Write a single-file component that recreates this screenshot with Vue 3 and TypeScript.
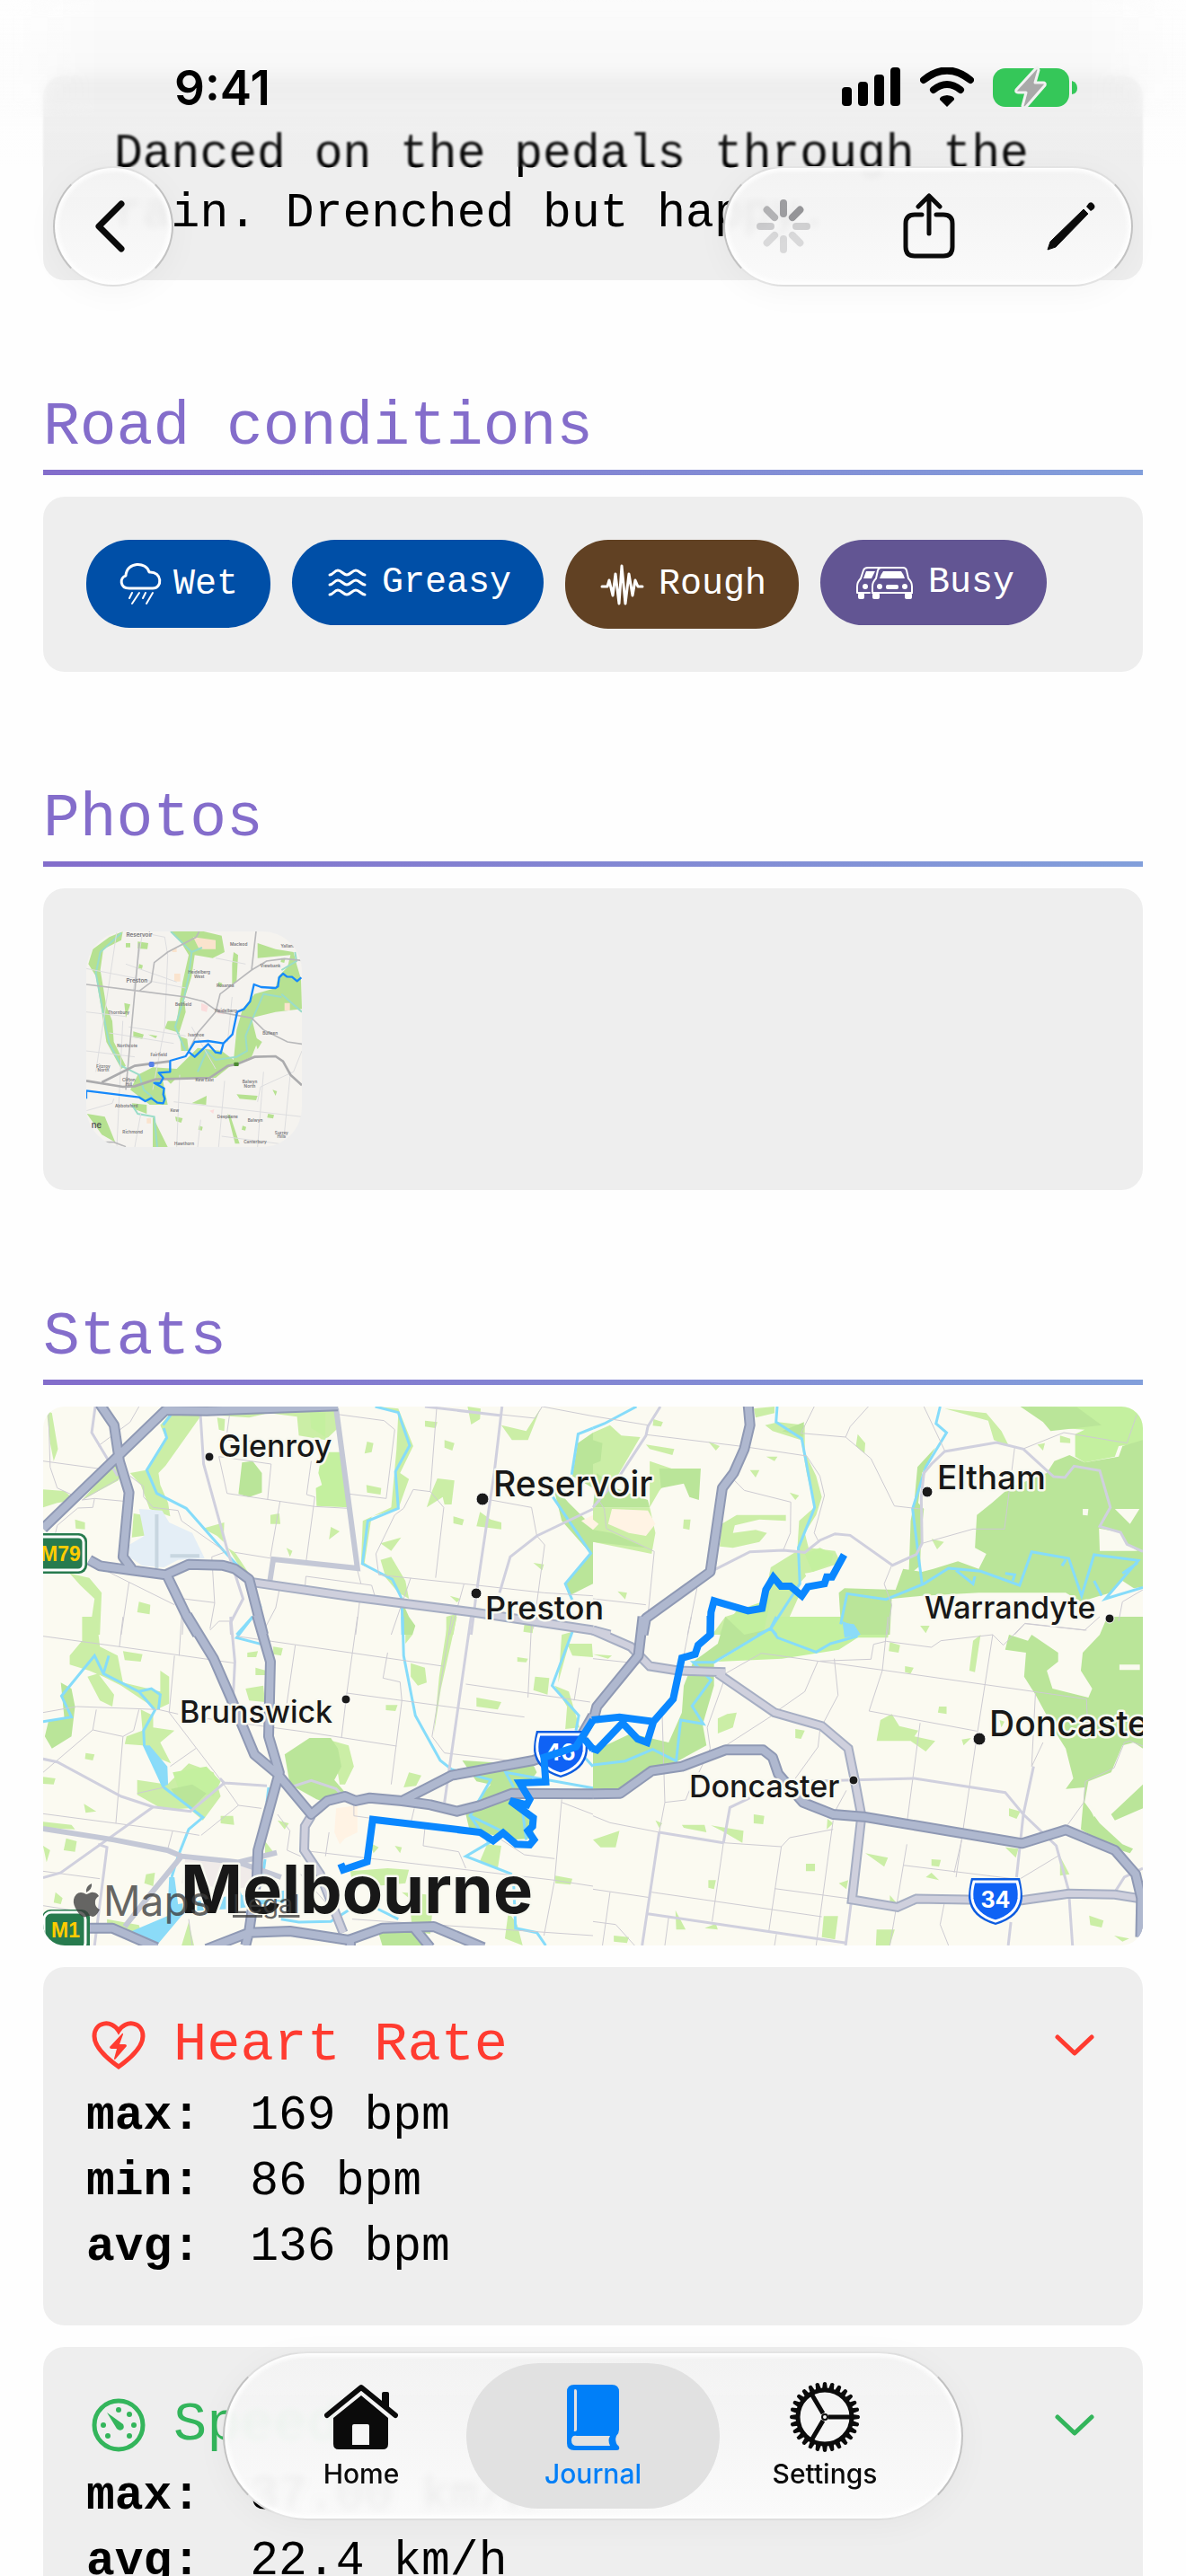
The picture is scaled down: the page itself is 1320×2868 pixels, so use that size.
<script setup lang="ts">
import { ref } from 'vue'

interface MapLayer {
  id: string
  paths: [string, string, string, string]
}

interface Place {
  name: string
  x: number
  y: number
  size: number
  dot: [number, number, number]
}

// The map is split in four tiles, each in the survey grid of its own quadrant.
const tileTransforms = [
  'translate(-8 -126) scale(.3954 .33333)',
  'translate(612 -126) scale(.4209 .33333)',
  'translate(-8 234) scale(.3954 .33333)',
  'translate(612 234) scale(.4209 .33333)',
]

const layers: MapLayer[] = [
  {
    id: 'park',
    paths: [
      'M30 390L45 400 62 520 50 560 40 500ZM20 655L80 660 110 690 60 700 20 715ZM130 690L205 590 225 560 240 600 232 625ZM375 405L465 408 365 575 345 600 350 640 372 700 378 745 320 720 295 640 265 600 310 590 365 480 350 440ZM480 405L735 388 840 388 850 450 815 490 740 475 735 412 655 400 600 415ZM510 415L532 420 530 460 515 455ZM932 495L950 500 945 530 925 535ZM930 640L972 650 970 672 932 665ZM960 378L1020 385 1062 510 1025 600 1050 620 1020 720 945 745 925 900 960 930 915 905 920 760 1000 715 1015 520 1020 400ZM1095 425L1130 430 1125 450 1095 445ZM1150 490L1178 500 1172 525 1150 515ZM1215 378L1252 385 1250 420 1225 438ZM1130 618L1178 625 1170 705 1150 705 1145 680 1100 715 1115 660ZM1175 745L1205 755 1200 775 1175 768ZM1250 730L1280 755 1310 765 1310 788 1240 778ZM1310 440L1380 460 1420 385 1385 490 1340 490ZM660 740L685 735 688 770 660 770ZM830 780L855 795 825 822ZM705 850L722 860 715 880ZM1400 900L1430 905 1425 925ZM275 735L300 740 312 808 270 815ZM110 755L138 765 138 788 112 785ZM95 935L150 950 185 1000 180 1140 150 1140 165 1020 125 975ZM290 1030L322 1040 320 1072 285 1065ZM470 785L530 765 528 830 510 810ZM970 835L1028 815 1000 860ZM970 890L1000 880 1040 960 1050 1020 1020 1000 985 950ZM540 850L560 865 605 945 590 945ZM1165 1010L1195 1020 1185 1032ZM1155 1080L1185 1070 1175 1140 1155 1140ZM1375 1105L1400 1110 1398 1135 1372 1130Z',
      'M0 465L45 440 75 475 125 480 60 620 0 640ZM140 505L215 520 210 540 150 520ZM160 420L185 430 180 445 158 442ZM305 495L335 510 325 525ZM458 545L488 545 480 560ZM415 590L440 590 430 615ZM240 755L258 755 255 790 238 785ZM520 665L545 675 535 690ZM340 770L380 740 510 740 510 760 440 755 375 775 370 800 430 790 460 800 440 830 370 850 335 845ZM700 470L720 500 718 535 695 510ZM65 995L90 1000 85 1022ZM895 820L928 830 910 855ZM425 385L480 378 480 400 430 415ZM150 560L220 590 175 660 150 715 165 800 155 870 0 830 0 715 150 715ZM1040 400L1080 460 1100 510 1060 490 1045 425 930 385ZM1235 475L1262 485 1262 500 1235 498ZM1175 505L1195 500 1190 525ZM455 440L490 430 560 440 560 530 590 610 605 680 590 740 560 800 570 850 640 860 655 900 570 935 545 970 545 1010 520 1080 480 1140 315 1140 350 1080 450 1040 470 915 540 860 545 760 585 715 565 600 550 490 475 460Z',
      'M130 0L170 0 180 100 230 130 245 220 350 250 350 180 375 200 375 290 340 310 240 230 190 200 150 180 95 160 95 130 130 80ZM145 200L175 190 220 260 215 300 180 280ZM245 115L300 125 295 150 250 145ZM295 310L330 330 330 370 390 380 350 420 380 490 340 470 300 430 250 425 255 400 300 380ZM285 545L370 560 430 490 500 520 520 600 470 680 430 640 360 645 285 595ZM590 240L640 230 645 285 600 280ZM595 120L625 115 620 135 595 135ZM668 100L695 105 690 130 668 125ZM618 170L648 180 645 195 618 195ZM835 415L880 430 895 500 870 560 855 560ZM1040 0L1060 60 1040 90ZM1055 155L1095 170 1100 220 1075 230 1055 200ZM1160 10L1185 0 1140 240 1120 390 1135 200ZM1240 270L1310 285 1300 310 1240 300ZM1050 520L1085 530 1070 565 1035 570ZM985 295L1018 295 1012 315 985 312ZM1355 135L1385 140 1380 152 1355 150ZM1405 200L1445 205 1440 260 1400 245ZM1480 60L1510 50 1470 220ZM1495 90L1565 90 1568 135 1510 130ZM1460 230L1500 250 1530 370 1490 375 1495 300ZM1270 760L1310 765 1300 840 1250 815ZM885 850L990 840 1050 845 1040 890 950 900 890 890ZM1030 920L1120 930 1110 1060 1060 1050 1050 940ZM1462 865L1510 875 1505 895 1462 890ZM1330 985L1355 1030 1370 1098 1320 1075ZM20 685L100 695 110 710 20 705ZM85 740L115 750 110 785 78 780ZM20 765L40 780 30 820ZM520 665L555 665 558 695 520 690ZM680 680L712 690 700 710ZM430 1020L445 1098 410 1098ZM200 1010L290 1030 300 1070 200 1040ZM140 455L165 460 160 480 138 475ZM20 535L55 540 50 560 20 558ZM310 860L335 855 330 900 305 890ZM645 750L668 785 645 800ZM55 920L75 940 70 960 50 955ZM135 625L170 650 140 655ZM940 755L965 770 950 790ZM1010 765L1030 770 1025 790Z',
      'M760 345L790 325 810 365 860 380 850 400 905 415 880 450 840 415 750 415ZM915 300L935 300 935 325 912 320ZM355 325L380 320 370 370 330 390 330 340ZM535 375L560 380 550 408 535 405ZM1005 80L1025 60 1010 185 995 180ZM825 165L848 170 840 190 825 185ZM785 85L812 95 808 120 782 115ZM865 30L890 30 880 55ZM0 125L50 130 40 140ZM0 745L70 715 60 770 20 770ZM425 660L453 665 450 693 425 690ZM235 695L295 695 300 720 240 705ZM312 697L398 715 395 755 340 715ZM563 825L587 825 587 850 563 850ZM305 880L325 880 320 910 305 905ZM650 890L675 880 670 910ZM720 790L780 805 770 835ZM895 810L920 812 915 835 895 832ZM880 870L895 855 915 880ZM1100 640L1130 650 1120 675 1100 665ZM1090 770L1125 775 1118 805ZM1235 800L1260 860 1235 865ZM1312 998L1350 1015 1345 1038 1315 1030ZM1378 1065L1418 1075 1400 1085ZM610 1000L648 1000 640 1078 605 1070ZM750 1045L798 1045 785 1098 748 1098ZM218 980L245 1045 220 1045ZM55 1065L95 1070 90 1090 55 1085ZM165 680L183 690 175 705ZM785 930L802 955 785 952ZM620 675L635 690 618 710ZM295 1040L325 1025 330 1045ZM975 410L1000 405 980 430ZM1075 345L1088 350 1080 370Z',
    ],
  },
  {
    id: 'grove',
    paths: [
      'M805 530L858 530 880 715 790 710 788 650 805 640 795 600ZM770 390L815 400 815 480 775 450Z',
      'M1150 378L1454 378 1454 500 1390 510 1380 545 1300 565 1275 545 1275 470 1300 455 1240 450 1200 430ZM560 870L600 850 635 870 630 900 580 930ZM380 1060L470 1020 450 1140 330 1140Z',
      'M385 520L480 500 520 550 500 600 400 570Z',
      'M480 0L785 0 780 70 700 70 650 110 500 140 330 150 470 40Z',
    ],
  },
  {
    id: 'forest',
    paths: [
      'M580 565L610 560 636 600 636 665 600 680 570 670ZM1525 500L1568 465 1568 650 1510 610ZM1455 640L1500 700 1568 780 1568 970 1500 1010 1490 970 1562 870 1480 760ZM1035 1040L1050 1080 1068 1110 1060 1140 1030 1140Z',
      'M0 490L25 500 20 560 0 570ZM10 600L60 650 145 690 150 715 0 715ZM175 585L285 585 280 690 255 680 240 635 180 650ZM0 790L50 800 140 850 0 830ZM500 460L558 430 555 480ZM1130 378L1280 380 1345 440 1210 460 1190 430ZM905 515L870 600 860 700 875 720 868 800 865 910 835 940 840 760 850 690 858 580ZM1220 560L1260 540 1300 565 1390 545 1400 510 1454 490 1454 980 1430 985 1400 960 1370 1000 1340 1010 1290 1030 1250 1000 1100 1000 1020 1000 870 1010 790 1020 785 1140 700 1140 655 1100 650 1000 665 985 800 990 820 920 870 930 900 920 965 895 1020 920 1040 870 1010 850 1015 740 1055 700 1100 650 1200 600Z',
      'M70 220L100 240 110 300 100 400 45 440 25 400 35 350 80 340ZM700 460L770 405 830 405 850 440 860 500 840 545 880 600 830 625 790 610 715 560ZM380 575L440 560 480 590 440 640 400 610ZM1200 480L1400 495 1410 520 1360 600 1400 690 1400 740 1340 745 1220 710 1210 660 1280 560 1240 550ZM960 1040L1060 1050 1095 1098 975 1098Z',
      'M350 0L400 60 470 40 320 150 320 230 290 360 300 430 220 485 160 520 80 590 0 575 0 450 100 390 200 420 235 320 240 230 265 150 330 90ZM1100 60L1150 80 1160 60 1230 120 1230 150 1200 180 1215 240 1310 270 1320 240 1290 180 1295 120 1340 60 1360 0 1454 0 1454 440 1430 420 1400 430 1370 520 1310 550 1300 620 1340 690 1400 760 1428 775 1420 790 1370 770 1290 710 1300 570 1250 575 1270 540 1250 440 1220 380 1200 330 1170 260 1140 200 1145 120 1090 110ZM1370 660L1454 560 1454 640 1380 680Z',
    ],
  },
  {
    id: 'clearing',
    paths: [
      '',
      'M1295 720L1310 720 1308 742 1295 740ZM1380 720L1445 720 1420 770ZM1338 785L1395 798 1412 838 1440 860 1340 860ZM560 935L610 925 620 940 570 960Z',
      '',
      'M1392 160L1446 160 1446 178 1392 178ZM1310 630L1330 640 1325 670Z',
    ],
  },
  {
    id: 'airport',
    paths: [
      'M290 720L355 725 375 765 440 800 475 885 400 890 360 915 300 910 262 880 262 840 305 810Z',
      '',
      '',
      '',
    ],
  },
  { id: 'runway', paths: ['M340 738V918M378 877H460', '', '', ''] },
  {
    id: 'campus',
    paths: [
      'M1535 760L1568 740 1568 790Z',
      'M50 720L145 725 165 770 140 810 95 800 40 770ZM0 755L15 770 0 790Z',
      'M845 640L905 630 905 720 870 740 855 760 840 720Z',
      '',
    ],
  },
  { id: 'city', paths: ['', '', 'M420 810L620 835 610 900 560 910 410 890Z', ''] },
  {
    id: 'lake',
    paths: [
      '',
      'M660 1100L690 1105 708 1140 665 1140Z',
      'M310 1098L270 1050 370 1000 375 870 390 870 400 960 560 930 570 905 580 930 735 910 735 950 560 975 420 985 340 1098ZM305 430L320 430 370 500 372 560 355 570 340 520Z',
      'M660 15L690 30 705 62 665 70Z',
    ],
  },
  {
    id: 'river',
    paths: [
      'M380 405L358 440M360 450L368 482 312 590 340 668 423 718 530 862 600 950 633 1050M610 1080L565 1140M955 378L1020 398 1052 508 1012 595 1020 718 934 760 919 903 1003 955 1030 1020 1032 1140M1568 450L1526 470 1508 605M1455 680L1562 868 1490 970 1510 1025',
      'M0 450L30 435 115 378M487 378L484 430 552 485 586 715 543 850 547 970 470 1120 435 1140M470 1120L485 1140M918 378L907 435 935 465 880 580 845 720 870 970M655 1105L672 1003 775 1022 875 970 940 918 1025 928 1128 975 1160 863 1258 885 1292 1010 1325 873 1442 892 1355 1020 1454 982M960 925L1005 970 1010 945M1090 935L1115 940 1110 960M1325 960L1345 1010M1250 890L1240 910M1400 935L1440 900',
      'M20 350L100 335 72 265 165 130 190 190 290 250 335 312 303 380 305 430 360 570 470 670 430 710 400 800 382 870M190 190L205 130M290 250L325 240 350 260 345 310M1032 0L1035 130 1068 330 1138 480 1170 510 1280 545 1222 665 1310 715M1222 665L1275 755 1210 800 1340 860M1510 50L1453 230 1528 330 1520 380M610 0L565 70 635 92M1345 570L1322 520 1568 572M1345 900L1350 1040 1410 1055 1435 1098M1545 470L1568 500M1370 650L1380 745M690 1010L740 1020 830 1018 880 980 960 975 1020 1010M655 570L650 620M645 810L635 900',
      'M470 38L320 152 265 152 312 212 262 298 292 358 232 345 220 482 158 443 85 482 0 495M485 0L470 38 488 70 590 118 628 90 700 65',
    ],
  },
  {
    id: 'street',
    paths: [
      'M35 378L40 580 60 650 100 672M20 560L175 585M290 378L265 430 175 510M545 405L535 490 640 495M515 545L538 668 785 712 880 718M515 545L662 570 652 690M855 405L980 425 1010 455 986 685 882 670M687 695L660 880M775 560L762 672 785 680 760 900M560 865L663 885M130 690L165 685 255 695M55 800L60 775 118 717 160 715 165 685M130 690L232 620M265 610L303 645 303 680 330 715 400 725 410 760 530 860M530 865L495 880 503 1035 490 1120M415 1020L503 1033M200 928L390 1040M262 965L240 1140M417 1050L412 1140M1128 382L1110 662 1148 715 1125 950M1110 662L1062 655 1035 718 1010 740 957 870 965 940 1205 970 1430 1000 1568 1010M905 925L915 970M760 945L915 970 945 975 955 1015M912 1020L900 1140M1055 950L1000 1140M1280 690L1395 715 1410 810 1432 840 1400 1120M1205 970L1165 1140M1310 405L1405 417 1425 378 1568 410M685 990L675 1050 635 1140M760 945L757 985M550 1095L515 1095 490 1125',
      'M0 410L145 440M142 472L400 512 565 543 600 610 612 675 585 800 595 825M585 378L550 467 668 480 735 552 797 710 865 720M728 378L680 445 668 480M372 622L400 658 523 697 522 800 503 858M875 378L930 525M1115 515L1088 787 1005 787 870 835M1140 518L1245 465 1412 500 1438 405M15 690L30 720 35 785 162 862 145 1080M0 1020L140 1040M275 985L250 1140M790 908L770 970 790 1040 778 1140M1390 1095L1400 1030 1454 990M1115 1140L1142 1103 1300 1125 1340 1080',
      'M20 65L235 100 560 155M245 0L235 100M410 0L403 130M390 130L375 320M20 320L115 300 345 310 400 325M730 95L705 300M565 65L1145 165M905 0L875 255 1375 335M875 255L860 405M480 340L760 385 1015 432M990 120L977 205 1025 218 1030 280 1000 560M1170 0L1115 400 1150 455 1400 490M170 310L160 378 245 400 275 380 290 310M245 400L225 690M160 378L20 520M375 320L520 545 570 630 465 730M570 630L635 640M450 440L378 500M285 590L360 570M20 658L385 715 460 730M385 715L370 780M20 850L180 875M680 660L715 715 707 780 745 800M1210 225L1560 285M1395 20L1385 270M1530 170L1515 280M895 620L895 665 955 675M1065 640L1055 690M1095 705L1090 765 1190 785 1210 840M745 780L1460 880 1568 900M1480 610L1460 880 1430 1065M1480 620L1568 660M1310 745L1375 795 1460 808M890 1010L1568 1065M20 965L100 980M825 720L815 800M430 1010L440 1098M745 860L850 1000',
      'M0 140L110 155M260 0L240 130M350 190L445 122 765 178 1305 275 1308 370M600 148L735 142 742 92 775 82 895 102 920 80 1057 60 1085 95 1142 22 1305 45M1057 60L1015 400 960 870M595 148L560 250 490 312M638 140L648 262 605 365M780 0L765 180 730 315 1015 382M865 355L830 690M480 325L345 435M350 200L302 370 310 440 280 520M600 380L595 435 535 540M183 330L190 620 175 720M190 620L245 612 255 580M1170 255L1160 500 1190 420M345 755L498 768 520 738 635 710M345 755L315 1018M498 768L465 1050M635 680L590 1098M830 760L785 1098M975 745L955 855M820 830L1110 875M155 920L605 1002M480 908L680 942M0 910L150 938M0 1018L60 1028 110 1098M200 1005L190 1098M485 1060L480 1098M0 665L45 688 175 720M1454 432L1420 415 1405 420 1378 505 1302 550 1298 620 1255 695M1235 795L1130 875M930 950L918 1028 940 1098M45 920L25 1098M670 580L640 650',
    ],
  },
  {
    id: 'road',
    paths: [
      'M1095 378L1310 408M1312 378L1290 600 1240 1000 1225 1140M463 405L472 570 540 862 583 1020 548 1100 550 1140M1568 720L1410 810 1335 880 1305 1000M167 378L157 465 230 610',
      'M178 378L145 445 140 475 70 610 0 715M318 925L415 863 503 858 560 865 600 825 640 803 680 808 792 908 855 872 870 835 868 680 875 600 895 570 930 528 1067 498 1138 520 1218 612 1248 615 1272 577 1340 592 1368 715 1340 778 1395 798 1412 838 1454 862',
      'M20 475L60 485 240 600 330 635 435 650 530 555 650 565M330 635L70 855 20 872M530 555L518 540M715 570L775 547 845 575 865 600M548 0L560 150 555 270M175 760L200 770 165 1098M1225 0L1150 620',
      'M415 605L362 637 345 755M175 720L345 755M175 720L130 1098M560 550L690 545 850 540 1090 587 1138 660 1225 765 1258 915 1268 1098M1165 500L1138 660 1120 870M1105 1020L1098 1098M145 992L670 1090M683 950L668 1098M1380 920L1405 870 1454 840',
    ],
  },
  {
    id: 'avenue',
    paths: [
      'M845 385L905 918 668 888 658 965',
      '',
      'M20 708L220 745 370 780 410 800 570 820 690 870M570 820L678 788M410 800L320 930 250 1035',
      '',
    ],
  },
]

const trunkRoads = [
  'M610 965L900 1015 1230 1065 1568 1125',
  'M0 1125L45 1140',
  'M775 665L757 700 755 780 800 860 865 1055',
  'M0 45L100 100 150 165 225 180 350 185M330 190L480 320 605 365 675 440 692 545 710 665 685 945 805 970 855 942 990 945 1130 948 1258 925 1380 928 1440 940',
]

const freeways = [
  'M180 370L220 440 235 560 262 665 245 880 270 920M20 785L365 390 480 392 850 376M150 890L180 910 270 925 365 940 430 905 525 908 560 920 600 955 640 1140M370 945L425 1080 455 1140',
  'M410 370L415 440 400 520 372 600 342 650 310 930 140 1085 132 1140',
  'M425 -6L500 140 548 270 615 460 680 525 775 660 820 615 870 600 900 615 940 605 1030 615 1110 628 1185 650 1250 630 1340 590 1568 592M622 -6L660 150 655 400 685 520 625 780 622 870 600 1050 590 1098M1035 612L1170 530 1400 480 1520 430 1568 330M150 1040L215 1040 340 1105M480 1110L600 1055 715 1050 880 1080 975 1040 1120 1035 1260 1105M1065 1040L1110 1105M885 1080V1105',
  'M0 350L10 300 120 130 132 0M0 592L72 590 155 515 235 500 350 445 450 445 475 470 490 525 555 620 635 660 715 668 1135 757 1250 712 1380 780 1435 860 1450 940 1448 1070',
]

const route = [
  '',
  'M664 873L632 947 618 947 612 970 568 980 552 1010 522 978 497 978 477 948 457 990 447 1052 410 1060 320 1027 312 1065 310 1142',
  'M1568 345L1520 435 1430 470 1435 552 1362 555 1390 610 1382 628 1335 615 1400 672 1398 700 1385 715 1402 745 1390 762 1352 760 1315 722 1287 748 1250 720 948 677 932 818 865 845 858 825M1545 410L1568 443',
  'M310 -3L310 60 278 95 270 125 235 138 212 275 160 350 70 335 -3 345M160 350L143 420 118 408 78 355 10 445 -2 440',
]

const places: Place[] = [
  { name: 'Glenroy', x: 195, y: 56, size: 34, dot: [185, 56, 5] },
  { name: 'Reservoir', x: 501, y: 100, size: 39, dot: [489, 103, 7] },
  { name: 'Preston', x: 492, y: 237, size: 36, dot: [482, 208, 6] },
  { name: 'Eltham', x: 995, y: 92, size: 37, dot: [984, 95, 6] },
  { name: 'Warrandyte', x: 981, y: 236, size: 34, dot: [1187, 236, 5] },
  { name: 'Brunswick', x: 152, y: 352, size: 34, dot: [337, 326, 5] },
  { name: 'Doncaster', x: 719, y: 435, size: 34, dot: [902, 416, 5] },
  { name: 'Doncaster East', x: 1053, y: 367, size: 39, dot: [1042, 370, 7] },
]

const shields = [
  { label: '46', x: 546, y: 361 },
  { label: '34', x: 1030, y: 525 },
]

const suburbs: [string, number, number, number][] = [
  ['Reservoir', 345, 548, 19],
  ['Macleod', 677, 578, 14],
  ['Yallambie', 850, 584, 14],
  ['Preston', 337, 702, 19],
  ['Heidelberg', 545, 672, 14],
  ['West', 545, 686, 14],
  ['Viewbank', 783, 652, 14],
  ['Rosanna', 632, 717, 14],
  ['Bellfield', 492, 779, 14],
  ['Heidelberg', 635, 800, 14],
  ['Thornbury', 276, 806, 14],
  ['Ivanhoe', 535, 882, 14],
  ['Bulleen', 782, 876, 14],
  ['Northcote', 305, 919, 14],
  ['Fairfield', 410, 949, 14],
  ['Fitzroy', 225, 987, 14],
  ['North', 225, 999, 14],
  ['Clifton', 310, 1033, 14],
  ['Hill', 310, 1046, 14],
  ['Kew East', 563, 1032, 14],
  ['Balwyn', 714, 1039, 14],
  ['North', 714, 1052, 14],
  ['Abbotsford', 302, 1120, 14],
  ['Kew', 463, 1133, 14],
  ['Deepdene', 640, 1154, 14],
  ['Balwyn', 732, 1167, 14],
  ['Richmond', 323, 1205, 14],
  ['Hawthorn', 495, 1246, 14],
  ['Canterbury', 732, 1240, 14],
  ['Surrey', 820, 1210, 14],
  ['Hills', 820, 1222, 14],
]

const heartRows = [
  { label: 'max:', value: '169 bpm' },
  { label: 'min:', value: '86 bpm' },
  { label: 'avg:', value: '136 bpm' },
]
const speedRows = [
  { label: 'max:', value: '37.00 km/h' },
  { label: 'avg:', value: '22.4 km/h' },
]

const spokes = [0.8, 0.88, 0.34, 0.28, 0.28, 0.28, 0.38, 0.6]
const gearTeeth = Array.from({ length: 28 }, (_, i) => (i * 360) / 28)
const activeTab = ref('Journal')
</script>

<template>
  <div class="app">
    <main class="scroll">
      <section class="notes card">
        <p>Danced on the pedals through the rain. Drenched but happy.</p>
      </section>

      <section class="section">
        <h2>Road conditions</h2>
        <ul class="card chips">
          <li class="chip blue">
            <svg width="49" height="50" viewBox="0 0 49 50" aria-hidden="true">
              <path d="M12 30C1 30 1 18 8 16C9 0 31 0 34 12C49 11 49 30 38 30Z" class="line" />
              <path d="M15 35L12 41M23 35L15 47M30 35L27 41M38 35L31 47" class="line thin" />
            </svg>
            Wet
          </li>
          <li class="chip blue">
            <svg width="52" height="47" viewBox="0 0 52 47" aria-hidden="true">
              <path v-for="y in [0, 11, 22]" :key="y" :transform="`translate(0 ${y})`" class="line" d="M6 15C10 15 11 10 15 10S21 15 25 15 31 10 35 10 41 15 45 15" />
            </svg>
            Greasy
          </li>
          <li class="chip brown">
            <svg width="56" height="51" viewBox="0 0 56 51" aria-hidden="true">
              <path class="line" d="M5 28H11L13 21 17 38 20 14 24 47 27 5 31 47 35 14 39 38 42 21 45 28H50" />
            </svg>
            Rough
          </li>
          <li class="chip violet">
            <svg width="72" height="47" viewBox="0 0 72 47" aria-hidden="true">
              <path d="M31 7H17Q13 7 12 10L9 19Q5 23 5 28V35H19" class="line thin" />
              <path d="M15 11H25L21 19H12Z" fill="#fff" />
              <ellipse cx="14" cy="28" rx="3" ry="3" fill="#fff" />
              <rect x="6" y="35" width="7" height="7" rx="2" fill="#fff" />
              <path d="M32 7H56Q59 7 60 10L62 19Q66 23 66 28V35H22V28Q22 23 26 19L28 10Q29 7 32 7Z" fill="#625593" stroke="#fff" stroke-width="2" />
              <path d="M34 11H54Q57 15 58 19H30Q31 15 34 11Z" fill="#fff" />
              <circle cx="30" cy="28" r="3" fill="#fff" />
              <circle cx="58" cy="28" r="3" fill="#fff" />
              <rect x="37" y="26" width="14" height="5" rx="2" fill="#fff" />
              <rect x="22" y="35" width="8" height="7" rx="2" fill="#fff" />
              <rect x="58" y="35" width="8" height="7" rx="2" fill="#fff" />
            </svg>
            Busy
          </li>
        </ul>
      </section>

      <section class="section">
        <h2>Photos</h2>
        <div class="card photos">
          <button class="photo" type="button" aria-label="Route photo">
            <svg viewBox="168 531 720 720" role="img" aria-label="Route through Melbourne">
              <rect x="168" y="531" width="720" height="720" fill="#f5f3ef" />
              <g fill="#b6e191">
                <path d="M245 550L290 531 285 560 225 590 215 660 235 780 255 830 260 900 300 980 285 990 235 900 220 800 200 680 175 640 190 590Z" />
                <path d="M450 531L560 531 620 545 630 600 590 620 530 610 520 680 495 760 500 800 475 880 505 890 510 930 485 930 480 870 430 855 440 830 470 830 490 700 510 610 480 560Z" />
                <path d="M740 570L800 590 860 600 870 640 885 690 888 790 800 800 720 820 740 900 720 950 650 980 600 1020 470 1020 450 1040 420 1010 440 1110 380 1110 315 1060 340 1010 390 985 470 990 540 920 620 930 660 960 670 860 690 790 730 740 800 720 810 680 840 650 850 610 740 620Z" />
                <path d="M340 565L375 570 372 590 340 588ZM300 570l15 0 0 14-15 0ZM660 600L675 610 670 700 655 710 655 640ZM325 865L360 875 355 890 325 885ZM375 875L405 880 400 888ZM295 770L315 775 300 820ZM520 1105L570 1080 568 1110ZM670 1075L740 1080 735 1095 680 1090ZM790 1060L805 1065 800 1080ZM320 1105L370 1110 370 1140 330 1125ZM390 1150L440 1251 390 1251ZM170 1140L230 1150 265 1235 220 1210ZM465 1150L490 1155 485 1170 468 1165ZM725 880L755 900 740 925ZM545 1180l12 4-3 12-12-3ZM610 700l12 4-3 12-12-3ZM640 1140L650 1150 680 1240 665 1240ZM820 620l12 4-3 12-12-3ZM345 640l12 4-3 12-12-3ZM775 1140l20 4-3 12-20-3ZM690 1180l12 4-3 12-12-3Z" />
              </g>
              <path d="M525 550L600 560 600 590 545 590ZM462 672H482V698H462ZM455 588H470V600H455ZM370 1155H384V1172H370ZM830 770H848V795H830Z" fill="#fae3cd" />
              <path d="M552 770L575 780 570 800 552 795ZM605 790L630 795 628 808 605 805ZM580 1130L595 1125 592 1140Z" fill="#fbdcdc" />
              <g fill="none" stroke="#9adcc9" stroke-width="6">
                <path d="M285 536L215 600 200 670 235 860 245 905 285 980 345 1010 360 1060 390 1085M450 531L520 600 555 585M520 600L510 680 495 750 465 850 500 930M865 600L870 630 820 660M820 750L760 740 720 830 700 880 705 930 670 950 600 960 570 930 540 1000M320 1110L340 1140 395 1150 405 1251M820 740L888 800" />
              </g>
              <g fill="none" stroke="#dddddf" stroke-width="3">
                <path d="M270 531L200 1000M355 540L325 730M440 610L430 850 390 1060M168 655L500 720M168 800L300 815M310 850L500 880M245 870L460 905M300 640L470 700M290 830L270 1251M350 1140L330 1251M460 1100L888 1150M630 1030L610 1251M760 1000L740 1251M850 1000L830 1200M260 1090L255 1105 168 1130M480 1010L470 1251M620 1215L888 1250M168 930L330 950M600 620L700 640M655 750L640 900M888 930L860 1000 750 1050 740 1100M380 540L430 550 440 610M520 850L600 990M550 1160L540 1251" />
              </g>
              <g fill="none" stroke="#b9b9bb" stroke-width="5">
                <path d="M168 708L345 730 500 750 560 765 610 800 720 820 760 860 840 900 888 907M545 531L535 550 440 600 395 635 385 700 345 730M735 531L720 660 615 740 600 800 540 870 510 930M720 660L770 630 830 622 888 628M345 570L300 1060M168 1235L260 1235 300 1250" />
                <path d="M168 1030L290 1050 330 1048 400 1025 580 1020 640 980 670 975 730 950 800 948 825 965 850 1010 888 1045M220 1035L330 980 445 965" stroke-width="8" stroke="#ababad" />
              </g>
              <path d="M168 1063L345 1085 365 1098 385 1088 405 1103 425 1105 430 1090 425 1075 428 1055 395 1037 415 1038 425 1020 410 1003 448 1000 448 963 500 948 530 900 575 897 626 905 656 875 672 800 695 790 715 765 728 708 752 717 800 720 808 715 812 685 825 672 838 682 855 683 872 697 886 685M512 935L530 950 575 907 600 935 617 938 626 905M168 1090V1063" fill="none" stroke="#1689fb" stroke-width="7" stroke-linejoin="round" />
              <rect x="377" y="966" width="18" height="18" rx="5" fill="#5580ea" />
              <rect x="661" y="968" width="16" height="13" rx="3" fill="#4c8a33" />
              <g class="suburbs">
                <text v-for="s in suburbs" :key="s[0] + s[2]" :x="s[1]" :y="s[2]" :font-size="s[3]">{{ s[0] }}</text>
                <text x="202" y="1187" font-size="28" class="big">ne</text>
              </g>
            </svg>
          </button>
        </div>
      </section>

      <section class="section">
        <h2>Stats</h2>
        <div class="stats">
          <svg class="map" viewBox="0 0 1224 600" preserveAspectRatio="xMidYMid slice" role="group" aria-label="Ride map">
            <g v-for="layer in layers" :key="layer.id" :class="layer.id">
              <path v-for="(d, i) in layer.paths" :key="i" :d="d" :transform="tileTransforms[i]" />
            </g>
            <g class="trunk-edge"><path v-for="(d, i) in trunkRoads" :key="i" :d="d" :transform="tileTransforms[i]" /></g>
            <g class="trunk"><path v-for="(d, i) in trunkRoads" :key="i" :d="d" :transform="tileTransforms[i]" /></g>
            <g class="freeway-edge"><path v-for="(d, i) in freeways" :key="i" :d="d" :transform="tileTransforms[i]" /></g>
            <g class="freeway"><path v-for="(d, i) in freeways" :key="i" :d="d" :transform="tileTransforms[i]" /></g>

            <g v-for="s in shields" :key="s.label" :transform="`translate(${s.x} ${s.y})`">
              <path d="M3 0H57Q60 12 60 22Q58 44 30 52Q2 44 0 22Q0 12 3 0Z" fill="#0d5ce0" />
              <path d="M6 4H54Q57 14 56 23Q53 41 30 48Q7 41 4 23Q3 14 6 4Z" fill="#0f62f5" stroke="#fff" stroke-width="3" />
              <text x="30" y="33" class="shield-text">{{ s.label }}</text>
            </g>
            <g>
              <rect x="-24" y="141" width="73" height="45" rx="9" fill="#277b4e" />
              <rect x="-20" y="145" width="65" height="37" rx="6" fill="none" stroke="#fff" stroke-width="3" />
              <text x="-3" y="172" class="sign-text">M79</text>
              <rect x="-1" y="560" width="53" height="50" rx="9" fill="#277b4e" />
              <rect x="1" y="563" width="46" height="42" rx="8" fill="none" stroke="#fff" stroke-width="3" />
              <text x="9" y="591" class="sign-text">M1</text>
            </g>

            <g class="route"><path v-for="(d, i) in route" :key="i" :d="d" :transform="tileTransforms[i]" /></g>

            <g v-for="p in places" :key="p.name">
              <circle :cx="p.dot[0]" :cy="p.dot[1]" :r="p.dot[2]" class="dot" />
              <text :x="p.x" :y="p.y" :font-size="p.size" class="place">{{ p.name }}</text>
            </g>
            <text x="153" y="564" class="place city-name">Melbourne</text>
            <g class="attribution">
              <path d="M54 531q1 6-6 10q-1-7 6-10ZM48 543c3 0 5-3 8-2q4 0 6 4q-5 3-4 9q1 4 5 6q-4 8-8 8q-4-2-7 0q-5 2-10-6q-5-8-4-13q2-8 8-8q3 0 6 2Z" />
              <text x="67" y="567" font-size="46">Maps</text>
              <a href="#legal"><text x="211" y="564" font-size="29" text-decoration="underline">Legal</text></a>
            </g>
          </svg>

          <article class="card stat heart">
            <h3>
              <svg width="72" height="60" viewBox="-6 -3 72 60" aria-hidden="true">
                <path d="M30 51C16 41 3 29 3 17C3 1 22-2 30 11C38-2 57 1 57 17C57 29 44 41 30 51Z" fill="none" stroke="currentColor" stroke-width="5" />
                <path d="M34 14L20 29Q20 31 22 31H28L25 42Q25 44 27 42L39 28Q39 26 37 26H31L35 15Q35 13 34 14Z" fill="currentColor" />
              </svg>
              <span>Heart Rate</span>
              <button type="button" class="expand" aria-label="Show heart rate details">
                <svg width="44" height="24" viewBox="0 0 44 24" aria-hidden="true"><path d="M3 3L22 21 41 3" /></svg>
              </button>
            </h3>
            <dl>
              <template v-for="row in heartRows" :key="row.label">
                <dt>{{ row.label }}</dt>
                <dd>{{ row.value }}</dd>
              </template>
            </dl>
          </article>

          <article class="card stat speed">
            <h3>
              <svg width="72" height="60" viewBox="-6 0 72 60" aria-hidden="true">
                <circle cx="30" cy="30" r="27" fill="none" stroke="currentColor" stroke-width="5" />
                <path d="M17 16L35 29Q37 33 34 35Q31 37 28 34Z" fill="currentColor" />
                <g fill="currentColor">
                  <circle cx="30" cy="13" r="3" /><circle cx="42" cy="18" r="3" /><circle cx="47" cy="30" r="3" />
                  <circle cx="42" cy="42" r="3" /><circle cx="18" cy="42" r="3" /><circle cx="13" cy="30" r="3" />
                </g>
              </svg>
              <span>Speed</span>
              <button type="button" class="expand" aria-label="Show speed details">
                <svg width="44" height="24" viewBox="0 0 44 24" aria-hidden="true"><path d="M3 3L22 21 41 3" /></svg>
              </button>
            </h3>
            <dl>
              <template v-for="row in speedRows" :key="row.label">
                <dt>{{ row.label }}</dt>
                <dd>{{ row.value }}</dd>
              </template>
            </dl>
          </article>
        </div>
      </section>
    </main>

    <header class="top">
      <div class="status">
        <time>9:41</time>
        <div class="status-icons">
          <svg width="66" height="44" viewBox="0 0 66 44" aria-label="Signal" role="img">
            <rect x="0" y="22" width="11" height="21" rx="4" /><rect x="18" y="16" width="11" height="27" rx="4" />
            <rect x="36" y="8" width="11" height="35" rx="4" /><rect x="54" y="0" width="11" height="43" rx="4" />
          </svg>
          <svg width="60" height="44" viewBox="0 0 60 44" aria-label="Wi-Fi" role="img">
            <path d="M4 14Q30-7 56 14M15 25Q30 13 45 25" fill="none" stroke="#000" stroke-width="8" stroke-linecap="round" />
            <path d="M30 44L22 36Q21 32 30 31Q39 32 38 36Z" />
          </svg>
          <svg width="95" height="48" viewBox="0 0 95 48" aria-label="Battery charging" role="img">
            <rect x="0" y="3" width="85" height="43" rx="14" fill="#35c759" />
            <path d="M88 17Q94 19 94 25T88 32Z" fill="#35c759" />
            <path d="M48 3L26 27Q25 30 28 30H37L33 45Q34 48 37 46L58 22Q59 19 56 19H47L51 5Q50 1 48 3Z" fill="#a9a9a9" stroke="#f1f1f1" stroke-width="3" stroke-linejoin="round" />
          </svg>
        </div>
      </div>
      <div class="toolbar">
        <button type="button" class="glass back" aria-label="Back">
          <svg width="34" height="58" viewBox="0 0 34 58" aria-hidden="true"><path d="M30 4L5 29 30 54" fill="none" stroke="#0b0b0b" stroke-width="7" stroke-linecap="round" stroke-linejoin="round" /></svg>
        </button>
        <div class="glass actions">
          <svg width="60" height="60" viewBox="-30 -30 60 60" role="img" aria-label="Loading">
            <rect v-for="(o, i) in spokes" :key="i" x="-4" y="-30" width="8" height="20" rx="4" fill="#87878b" :opacity="o" :transform="`rotate(${i * 45 })`" />
          </svg>
          <button type="button" aria-label="Share">
            <svg width="58" height="74" viewBox="0 0 58 74" aria-hidden="true">
              <path d="M21 24H13Q3 24 3 34V60Q3 70 13 70H45Q55 70 55 60V34Q55 24 45 24H37M29 4V45M17 15L29 3 41 15" fill="none" stroke="#0b0b0b" stroke-width="5" stroke-linecap="round" stroke-linejoin="round" />
            </svg>
          </button>
          <button type="button" aria-label="Edit">
            <svg width="54" height="54" viewBox="0 0 54 54" aria-hidden="true">
              <path d="M1 53L4 44 41 8 46 13 10 50Z" fill="#0b0b0b" stroke="#0b0b0b" stroke-linejoin="round" />
              <path d="M44 5L47 1Q50-1 52 2Q55 5 52 8L49 10Z" fill="#0b0b0b" />
            </svg>
          </button>
        </div>
      </div>
    </header>

    <nav class="tabs glass" aria-label="Main">
      <button type="button" :class="['tab', { active: activeTab === 'Home' }]" @click="activeTab = 'Home'">
        <svg width="82" height="78" viewBox="0 -3 82 78" aria-hidden="true">
          <path d="M64 20V10Q64 8 66 8H70Q72 8 72 10V31Z" fill="currentColor" />
          <path d="M3 34L41 3 79 34" fill="none" stroke="currentColor" stroke-width="6" stroke-linecap="round" stroke-linejoin="round" />
          <path d="M10 37L41 12 71 37V66Q71 72 65 72H16Q10 72 10 66ZM33 44Q31 44 31 46V67H50V46Q50 44 48 44Z" fill="currentColor" fill-rule="evenodd" />
        </svg>
        Home
      </button>
      <button type="button" :class="['tab', { active: activeTab === 'Journal' }]" @click="activeTab = 'Journal'">
        <svg width="60" height="78" viewBox="-1 -3 60 78" aria-hidden="true">
          <path d="M8 0H50Q58 0 58 8V50Q58 54 55 57Q53 62 56 67Q59 69 58 72Q57 73 55 73H8Q0 73 0 65V8Q0 0 8 0Z" fill="currentColor" />
          <path d="M9 5Q11 5 11 7V50Q11 52 9 52T8 50V7Q8 5 9 5Z" fill="#e2e2e2" />
          <path d="M11 57H48Q45 62 48 68H11Q5 68 5 62T11 57Z" fill="#e2e2e2" />
        </svg>
        Journal
      </button>
      <button type="button" :class="['tab', { active: activeTab === 'Settings' }]" @click="activeTab = 'Settings'">
        <svg width="78" height="78" viewBox="-39 -39 78 78" aria-hidden="true">
          <path v-for="a in gearTeeth" :key="a" d="M-3-31L-2-38Q0-40 2-38L3-31Z" fill="currentColor" :transform="`rotate(${a})`" />
          <circle r="30" fill="none" stroke="currentColor" stroke-width="5" />
          <path d="M4 0H29M-2-4L-15-26M-2 4L-15 26" stroke="currentColor" stroke-width="5" />
          <circle r="3" fill="none" stroke="currentColor" stroke-width="2" />
        </svg>
        Settings
      </button>
    </nav>
  </div>
</template>

<style>
body {
  margin: 0;
  background: #fff;
}
</style>

<style scoped>
.app {
  position: relative;
  height: 100vh;
  overflow: hidden;
  background: #fefefe;
  color: #000;
  font-family: Inter, "Liberation Sans", sans-serif;
}
.scroll {
  box-sizing: border-box;
  height: 100%;
  overflow-y: auto;
  scrollbar-width: none;
  padding: 84px 48px 0;
  font-family: "Liberation Mono", monospace;
}
.card {
  background: #eee;
  border-radius: 24px;
}
.notes {
  padding: 55px 79px 41px;
}
.notes p {
  margin: 0;
  font-size: 53px;
  line-height: 66px;
}
.section {
  margin-top: 123px;
}
h2 {
  margin: 0 0 24px;
  padding-bottom: 12px;
  background: linear-gradient(90deg, #836dcb, #829fdb) bottom / 100% 6px no-repeat;
  color: #846dcb;
  font-size: 68px;
  font-weight: 400;
  line-height: 82px;
}
.chips {
  display: flex;
  flex-wrap: wrap;
  align-items: flex-start;
  gap: 24px;
  margin: 0;
  padding: 48px;
  list-style: none;
}
.chip {
  display: flex;
  align-items: center;
  gap: 12px;
  padding: 24px 36px;
  border-radius: 48px;
  color: #fff;
  font-size: 40px;
  line-height: 47px;
}
.blue { background: #004fa7; }
.brown { background: #614123; }
.violet { background: #625593; }
.line {
  fill: none;
  stroke: #fff;
  stroke-width: 3;
  stroke-linecap: round;
  stroke-linejoin: round;
}
.thin { stroke-width: 2; }
.photos {
  display: flex;
  padding: 48px;
}
.photo {
  width: 240px;
  height: 240px;
  padding: 0;
  overflow: hidden;
  border: 0;
  border-radius: 44px;
  background: none;
}
.photo svg { display: block; }
.suburbs {
  fill: #77767a;
  font-family: Inter, sans-serif;
  font-weight: 600;
  text-anchor: middle;
}
.big { fill: #555; }
.stats {
  display: flex;
  flex-direction: column;
  gap: 24px;
}
.map {
  display: block;
  width: 100%;
  aspect-ratio: 1224 / 600;
  border-radius: 24px;
  background: #fbfaf1;
  font-family: Inter, "Liberation Sans", sans-serif;
}
.map path { vector-effect: non-scaling-stroke; }
.park { fill: #cbeea6; }
.grove { fill: #c4f09f; }
.forest { fill: #bae599; }
.clearing { fill: #fafaf0; }
.airport { fill: #e4eef6; }
.runway { fill: none; stroke: #c8d6e0; stroke-width: 4; }
.campus { fill: #fff3e4; }
.city { fill: #f0ebe9; }
.lake { fill: #8bdbf8; }
.river { fill: none; stroke: #86dcfa; stroke-width: 3; }
.street { fill: none; stroke: #cdcbd2; stroke-width: 1; }
.road { fill: none; stroke: #d0d0de; stroke-width: 3; }
.avenue { fill: none; stroke: #c4c8d6; stroke-width: 6; }
.trunk-edge { fill: none; stroke: #a6aec3; stroke-width: 11; }
.trunk { fill: none; stroke: #cfd0dd; stroke-width: 7; }
.freeway-edge { fill: none; stroke: #8f99b4; stroke-width: 12; stroke-linejoin: round; }
.freeway { fill: none; stroke: #afb8cf; stroke-width: 8; stroke-linejoin: round; }
.route { fill: none; stroke: #0a87ff; stroke-width: 8; }
.dot { fill: #1a1a1a; stroke: #fff; stroke-width: 1; }
.place {
  fill: #181818;
  stroke: #f8f9f0;
  stroke-width: 5;
  stroke-linejoin: round;
  paint-order: stroke;
  font-weight: 500;
}
.city-name {
  font-size: 74px;
  font-weight: 700;
}
.shield-text {
  fill: #fff;
  font-size: 25px;
  font-weight: 700;
  text-anchor: middle;
}
.sign-text {
  fill: #fc0;
  font-family: "Liberation Sans", sans-serif;
  font-size: 23px;
  font-weight: 700;
}
.attribution { fill: #3c3c3c; opacity: .78; }
.attribution a { fill: inherit; }
.stat { padding: 48px 48px 50px; }
.heart h3 { color: #ff3b30; }
.speed h3 { color: #33b55b; }
h3 {
  display: flex;
  align-items: center;
  gap: 25px;
  margin: 0 0 4px;
  font-size: 62px;
  font-weight: 400;
  line-height: 78px;
}
.expand {
  display: flex;
  margin-left: auto;
  padding: 0 6px;
  border: 0;
  background: none;
  color: inherit;
}
.expand path {
  fill: none;
  stroke: currentColor;
  stroke-width: 5;
  stroke-linecap: round;
  stroke-linejoin: round;
}
dl {
  display: grid;
  grid-template-columns: auto 1fr;
  column-gap: 55px;
  margin: 0;
  font-size: 53px;
  line-height: 73px;
}
dt { font-weight: 700; }
dd { margin: 0; }
.top {
  position: absolute;
  inset: 0 0 auto;
}
.top::before {
  content: "";
  position: absolute;
  inset: 0;
  bottom: auto;
  height: 186px;
  background: linear-gradient(180deg, rgba(255, 255, 255, .4), rgba(250, 250, 250, .3) 45%, rgba(255, 255, 255, 0));
  backdrop-filter: blur(1px);
}
.top::after {
  content: "";
  position: absolute;
  inset: 0;
  bottom: auto;
  z-index: 0;
  height: 130px;
  background: linear-gradient(180deg, rgba(0, 0, 0, .01), rgba(0, 0, 0, .02) 60%, rgba(0, 0, 0, 0));
  backdrop-filter: blur(8px);
  mask-image: linear-gradient(90deg, transparent, #000 8%, #000 92%, transparent);
}
.status {
  position: relative;
  z-index: 1;
  box-sizing: border-box;
  display: flex;
  justify-content: space-between;
  height: 185px;
  padding: 66px 120px 0 194px;
}
.status time {
  font-size: 53px;
  font-weight: 600;
  line-height: 64px;
}
.status-icons {
  display: flex;
  gap: 21px;
  height: 62px;
  align-items: center;
}
.toolbar {
  position: relative;
  z-index: 1;
  display: flex;
  justify-content: space-between;
  padding: 0 59px;
}
.glass {
  box-sizing: border-box;
  border: 2px solid rgba(130, 130, 130, .45);
  border-top-color: rgba(160, 160, 160, .25);
  border-bottom-color: rgba(160, 160, 160, .25);
  background: linear-gradient(180deg, rgba(243, 243, 243, .94), rgba(250, 250, 250, .95));
  box-shadow: inset 0 0 4px 3px #fff, 0 6px 36px rgba(0, 0, 0, .04);
  backdrop-filter: blur(4px);
}
.back {
  display: flex;
  align-items: center;
  justify-content: center;
  width: 134px;
  height: 134px;
  padding: 0 8px 0 0;
  border-radius: 50%;
}
.actions {
  display: flex;
  align-items: center;
  justify-content: space-between;
  width: 456px;
  height: 134px;
  padding: 0 40px 0 35px;
  border-radius: 67px;
}
.actions button {
  display: flex;
  padding: 0;
  border: 0;
  background: none;
}
.tabs {
  position: absolute;
  bottom: 62px;
  left: 50%;
  display: flex;
  width: 824px;
  height: 188px;
  padding: 11px 23px;
  border-radius: 94px;
  transform: translateX(-50%);
}
.tab {
  display: flex;
  flex: 1;
  flex-direction: column;
  align-items: center;
  margin: 0 -12px;
  padding: 21px 0 0;
  border: 0;
  border-radius: 81px;
  background: none;
  color: #0b0b0b;
  font-family: inherit;
  font-size: 30px;
  font-weight: 500;
  line-height: 36px;
  gap: 6px;
}
.tab.active {
  background: #e1e1e1;
  color: #007ff8;
}
</style>
